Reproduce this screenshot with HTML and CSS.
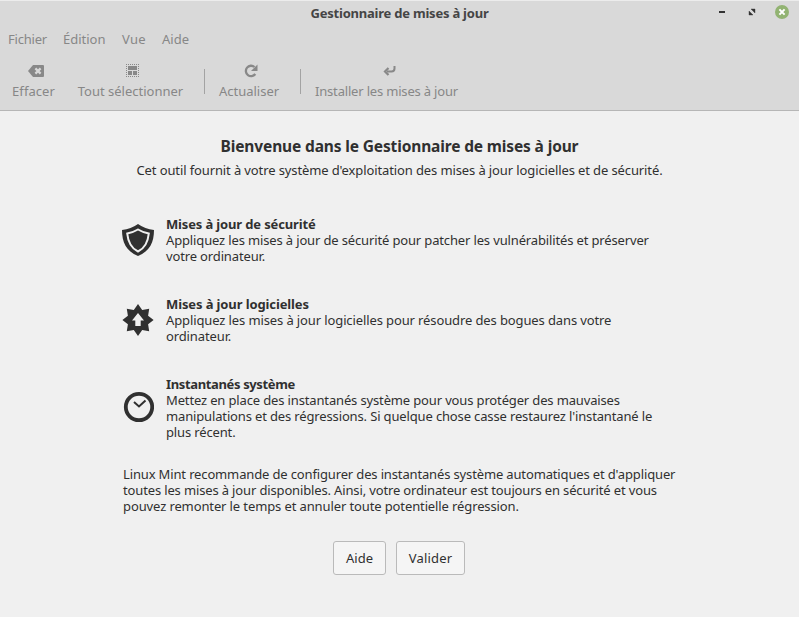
FILE: index.html
```
<!DOCTYPE html>
<html lang="fr">
<head>
<meta charset="utf-8">
<title>Gestionnaire de mises à jour</title>
<link rel="stylesheet" href="styles.css">
</head>
<body>
<header class="chrome">
  <div class="titlebar">
    <h1 class="window-title">Gestionnaire de mises à jour</h1>
    <div class="controls">
      <svg width="16" height="16" viewBox="0 0 16 16"><path d="M5 7h6v2H5z" fill="#333"/></svg>
      <svg width="16" height="16" viewBox="0 0 16 16"><path d="M7 5h4v4zM5 7v4h4z" fill="#333" stroke="#333" stroke-width=".4"/></svg>
      <svg width="16" height="16" viewBox="0 0 16 16"><circle cx="8" cy="8" r="7" fill="#92b372"/><path d="M5.400 5.400l5.200 5.200M10.600 5.400l-5.200 5.200" stroke="#fff" stroke-width="2"/></svg>
    </div>
  </div>
  <nav class="menubar">
    <span class="menu menu-file">Fichier</span>
    <span class="menu menu-edit">Édition</span>
    <span class="menu menu-view">Vue</span>
    <span class="menu">Aide</span>
  </nav>
  <div class="toolbar">
    <div class="tool tool-clear">
      <svg width="16" height="16" viewBox="0 0 16 16"><path d="M5 2h10q1 0 1 1v10q0 1-1 1H5L0 8z" fill="#888"/><path d="M7.400 5.400l5.200 5.200M12.600 5.400l-5.200 5.200" stroke="#d9d9d9" stroke-width="2.200"/></svg>
      <span>Effacer</span>
    </div>
    <div class="tool tool-select">
      <svg width="16" height="16" viewBox="0 0 16 16"><path d="M2 1.500h13M2 13.500h13" stroke="#888" stroke-dasharray="1 1"/><path d="M2.500 1v13M14.500 1v13" stroke="#888" stroke-dasharray="1 1"/><path d="M4 3h9v4H4zM4 8h4v4H4zM9 8h4v4H9z" fill="#888"/></svg>
      <span>Tout sélectionner</span>
    </div>
    <i class="separator"></i>
    <div class="tool tool-refresh">
      <svg width="16" height="16" viewBox="0 0 16 16"><path d="M11.500 4A5.200 5.200 0 1 0 12.300 11" fill="none" stroke="#888" stroke-width="2.300"/><path d="M14.500 1.500V8H8z" fill="#888"/></svg>
      <span>Actualiser</span>
    </div>
    <i class="separator"></i>
    <div class="tool tool-install">
      <svg width="16" height="16" viewBox="0 0 16 16"><path d="M12.500 3v2.500q0 3-3 3H5" fill="none" stroke="#888" stroke-width="2"/><path d="M6.500 5L3 8.500 6.500 12" fill="none" stroke="#888" stroke-width="2.200"/></svg>
      <span>Installer les mises à jour</span>
    </div>
  </div>
</header>
<main class="welcome">
  <h2 class="heading">Bienvenue dans le Gestionnaire de mises à jour</h2>
  <p class="subtitle">Cet outil fournit à votre système d'exploitation des mises à jour logicielles et de sécurité.</p>
  <section class="feature">
    <svg class="feature-icon" width="32" height="32" viewBox="0 0 32 32"><path d="M16 0Q9 5 0 6C0 18 4 27 16 32C28 27 32 18 32 6Q23 5 16 0z" fill="#303030"/><path d="M16 5.500Q11 8.500 5.200 9.500C6 17.500 8.500 24 16 27.500C23.500 24 26 17.500 26.800 9.500Q21 8.500 16 5.500z" fill="#303030" stroke="#f0f0f0" stroke-width="2"/></svg>
    <div><h3>Mises à jour de sécurité</h3><p>Appliquez les mises à jour de sécurité pour patcher les vulnérabilités et préserver<br>votre ordinateur.</p></div>
  </section>
  <section class="feature">
    <svg class="feature-icon" width="32" height="32" viewBox="0 0 32 32"><path d="M16 0l4.200 5.900 7-1.100-1.100 7L31.600 16l-5.500 4.200 1.100 7-7-1.100L16 32l-4.200-5.900-7 1.100 1.100-7L.4 16l5.500-4.200-1.100-7 7 1.100z" fill="#303030"/><path d="M16 9l6 7.500h-3.300V22h-5.400v-5.500H10z" fill="#f0f0f0"/></svg>
    <div><h3 class="software">Mises à jour logicielles</h3><p class="software">Appliquez les mises à jour logicielles pour résoudre des bogues dans votre<br>ordinateur.</p></div>
  </section>
  <section class="feature snapshots">
    <svg class="feature-icon" width="32" height="32" viewBox="0 0 32 32"><circle cx="17" cy="16" r="13.200" fill="none" stroke="#303030" stroke-width="3.800"/><path d="M12 11l5 4.500 6.500-6" fill="none" stroke="#303030" stroke-width="2"/></svg>
    <div><h3 class="snapshot-title">Instantanés système</h3><p>Mettez en place des instantanés système pour vous protéger des mauvaises<br>manipulations et des régressions. Si quelque chose casse restaurez l'instantané le<br>plus récent.</p></div>
  </section>
  <p class="advice">Linux Mint recommande de configurer des instantanés système automatiques et d'appliquer<br>toutes les mises à jour disponibles. Ainsi, votre ordinateur est toujours en sécurité et vous<br><span class="software">pouvez remonter le temps et annuler toute potentielle régression.</span></p>
  <div class="actions">
    <button class="help">Aide</button>
    <button class="confirm">Valider</button>
  </div>
</main>
</body>
</html>
```
FILE: styles.css
```
* { box-sizing: border-box; }
body {
  margin: 0;
  background: #f0f0f0;
  color: #303030;
  font: 13px/16px "Noto Sans", sans-serif;
}
h1, h2, h3, p { margin: 0; font-size: 13px; }
svg { display: block; flex: none; }

.chrome {
  height: 111px;
  background: #d9d9d9;
  border-top: 1px solid #ececec;
  border-bottom: 1px solid #b6b6b6;
  color: #878787;
}
.titlebar {
  display: grid;
  grid-template-columns: 1fr auto 1fr;
  align-items: center;
  height: 25px;
}
.window-title {
  grid-column: 2;
  padding-bottom: 2px;
  color: #454545;
  letter-spacing: -0.22px;
}
.controls {
  display: flex;
  justify-content: flex-end;
  gap: 14px;
  padding-right: 9px;
  margin-top: -3px;
}
.menubar {
  display: flex;
  gap: 16px;
  padding: 5px 8px 0;
  height: 37px;
}
.menu-file { width: 39px; letter-spacing: -0.2px; }
.menu-edit { width: 43px; }
.menu-view { width: 24px; letter-spacing: 0.3px; }
.toolbar { display: flex; padding-left: 12px; white-space: nowrap; }
.tool {
  display: flex;
  flex-direction: column;
  align-items: center;
  gap: 4px;
}
.tool-clear { width: 43px; letter-spacing: 0.08px; }
.tool-clear svg { margin-left: 5px; }
.tool-select { width: 105px; margin-left: 23px; }
.tool-select svg { margin-left: 2px; }
.tool-refresh { width: 60px; }
.tool-refresh svg { margin-left: 4px; }
.tool-install { width: 143px; letter-spacing: -0.18px; }
.tool-install svg { margin-left: 6px; }
.separator {
  width: 1px;
  height: 25px;
  margin: 6px 14px 0 21px;
  background: #a3a3a3;
}

.welcome { padding-top: 25px; }
.heading {
  font-size: 15.5px;
  line-height: 20px;
  letter-spacing: -0.14px;
  text-align: center;
}
.subtitle {
  margin-top: 6px;
  letter-spacing: -0.115px;
  text-align: center;
}
.feature {
  display: flex;
  gap: 12px;
  width: 556px;
  height: 48px;
  margin: 38px 0 32px 122px;
  letter-spacing: -0.145px;
  white-space: nowrap;
}
.feature + .feature { margin-top: 0; }
.feature-icon { margin-top: 8px; }
.snapshots { height: 64px; margin-bottom: 26px; }
.snapshots .feature-icon { margin-top: 15px; }
.snapshot-title { letter-spacing: -0.36px; }
.software { letter-spacing: -0.115px; }
.advice {
  margin-left: 123px;
  letter-spacing: -0.145px;
  white-space: nowrap;
}
.actions {
  display: flex;
  gap: 10px;
  margin: 27px 0 0 333px;
}
button {
  height: 34px;
  padding: 0;
  border: 1px solid #bababa;
  border-radius: 3px;
  background: #f5f5f5;
  color: #303030;
  font: 13px/16px "Noto Sans", sans-serif;
}
.help { width: 53px; }
.confirm { width: 69px; letter-spacing: 0.2px; }
```
